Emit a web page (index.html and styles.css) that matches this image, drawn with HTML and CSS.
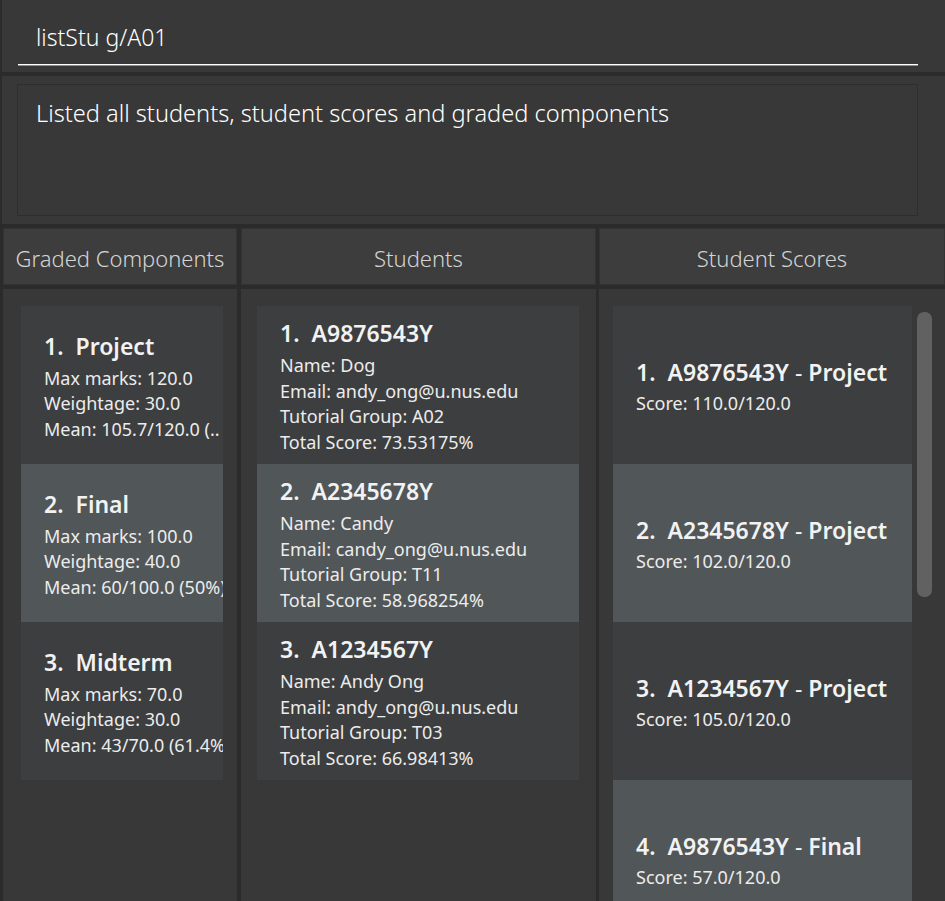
FILE: index.html
```html
<!DOCTYPE html>
<html lang="en">
<head>
<meta charset="utf-8">
<title>Grades</title>
<link rel="stylesheet" href="styles.css">
</head>
<body>
<div class="app">
  <div class="command-pane">
    <div class="command-field">listStu g/A01</div>
  </div>
  <div class="result-pane">
    <div class="result-box">Listed all students, student scores and graded components</div>
  </div>
  <div class="columns">
    <section class="column col-gc">
      <div class="col-header">Graded Components</div>
      <div class="col-list">
        <div class="card even">
          <div class="card-title"><span class="idx">1.</span>Project</div>
          <div class="card-line">Max marks: 120.0</div>
          <div class="card-line">Weightage: 30.0</div>
          <div class="card-line">Mean: 105.7/120.0 (..</div>
        </div>
        <div class="card odd">
          <div class="card-title"><span class="idx">2.</span>Final</div>
          <div class="card-line">Max marks: 100.0</div>
          <div class="card-line">Weightage: 40.0</div>
          <div class="card-line">Mean: 60/100.0 (50%)</div>
        </div>
        <div class="card even">
          <div class="card-title"><span class="idx">3.</span>Midterm</div>
          <div class="card-line">Max marks: 70.0</div>
          <div class="card-line">Weightage: 30.0</div>
          <div class="card-line">Mean: 43/70.0 (61.4%)</div>
        </div>
      </div>
    </section>
    <section class="column col-st">
      <div class="col-header">Students</div>
      <div class="col-list">
        <div class="card even">
          <div class="card-title"><span class="idx">1.</span>A9876543Y</div>
          <div class="card-line">Name: Dog</div>
          <div class="card-line">Email: andy_ong@u.nus.edu</div>
          <div class="card-line">Tutorial Group: A02</div>
          <div class="card-line">Total Score: 73.53175%</div>
        </div>
        <div class="card odd">
          <div class="card-title"><span class="idx">2.</span>A2345678Y</div>
          <div class="card-line">Name: Candy</div>
          <div class="card-line">Email: candy_ong@u.nus.edu</div>
          <div class="card-line">Tutorial Group: T11</div>
          <div class="card-line">Total Score: 58.968254%</div>
        </div>
        <div class="card even">
          <div class="card-title"><span class="idx">3.</span>A1234567Y</div>
          <div class="card-line">Name: Andy Ong</div>
          <div class="card-line">Email: andy_ong@u.nus.edu</div>
          <div class="card-line">Tutorial Group: T03</div>
          <div class="card-line">Total Score: 66.98413%</div>
        </div>
      </div>
    </section>
    <section class="column col-sc">
      <div class="col-header">Student Scores</div>
      <div class="col-list">
        <div class="card even">
          <div class="card-title"><span class="idx">1.</span>A9876543Y<span class="sep"> - </span>Project</div>
          <div class="card-line">Score: 110.0/120.0</div>
        </div>
        <div class="card odd">
          <div class="card-title"><span class="idx">2.</span>A2345678Y<span class="sep"> - </span>Project</div>
          <div class="card-line">Score: 102.0/120.0</div>
        </div>
        <div class="card even">
          <div class="card-title"><span class="idx">3.</span>A1234567Y<span class="sep"> - </span>Project</div>
          <div class="card-line">Score: 105.0/120.0</div>
        </div>
        <div class="card odd">
          <div class="card-title"><span class="idx">4.</span>A9876543Y<span class="sep"> - </span>Final</div>
          <div class="card-line">Score: 57.0/120.0</div>
        </div>
        <div class="scrollbar"></div>
      </div>
    </section>
  </div>
</div>
</body>
</html>
```

FILE: styles.css
```css
* { box-sizing: border-box; }

html, body {
  margin: 0;
  padding: 0;
  width: 945px;
  height: 901px;
  overflow: hidden;
  background: #2b2b2b;
  font-family: "Noto Sans", "Open Sans", sans-serif;
  color: #ffffff;
}

.app {
  display: flex;
  flex-direction: column;
  height: 901px;
}

.command-pane {
  height: 72px;
  margin-left: 2px;
  background: #383838;
  padding: 0 27px 0 16px;
}

.command-field {
  height: 65px;
  padding: 22px 0 0 18px;
  font-size: 23px;
  font-weight: 300;
  line-height: 1.36;
  color: #ffffff;
  border-bottom: 1px solid #ffffff;
  box-shadow: 0 1px 0 #8c8c8c;
}

.result-pane {
  height: 148px;
  margin-top: 4px;
  margin-left: 2px;
  background: #383838;
  padding: 8px 27px 8px 15px;
}

.result-box {
  height: 100%;
  border: 1px solid #2e2e2e;
  padding: 12px 0 0 18px;
  font-size: 23.6px;
  font-weight: 300;
  line-height: 1.36;
  color: #ffffff;
}

.columns {
  flex: 1;
  display: flex;
  margin-top: 4px;
  margin-left: 3px;
  min-height: 0;
}

.column {
  display: flex;
  flex-direction: column;
}

.col-gc { width: 234px; }
.col-st { width: 355px; margin-left: 4px; }
.col-sc { flex: 1; margin-left: 3px; }

.col-header {
  height: 57px;
  flex: none;
  background: #3d3d3d;
  border: 1px solid #333333;
  display: flex;
  align-items: center;
  justify-content: center;
  padding-top: 2px;
  font-size: 22px;
  font-weight: 300;
  color: #d4d4d4;
  white-space: nowrap;
}

.col-list {
  position: relative;
  flex: 1;
  margin-top: 4px;
  background: #383838;
  overflow: hidden;
  display: flex;
  flex-direction: column;
}

.col-gc .col-list { padding: 17px 14px 0 18px; }
.col-st .col-list { padding: 17px 17px 0 16px; }
.col-sc .col-list { padding: 17px 33px 0 14px; }

.card {
  height: 158px;
  flex: none;
  display: flex;
  flex-direction: column;
  justify-content: center;
  padding-left: 23px;
  overflow: hidden;
  white-space: nowrap;
}

.card.even { background: #3c3e3f; }
.card.odd { background: #515658; }

.card-title {
  font-size: 23px;
  font-weight: 600;
  line-height: 38.5px;
  color: #f2f2f2;
}

.idx {
  display: inline-block;
  margin-right: 12px;
}

.sep {
  font-weight: 400;
}

.card-line {
  font-size: 18px;
  line-height: 25.7px;
  color: #ececec;
}

.scrollbar {
  position: absolute;
  left: 318px;
  top: 23px;
  width: 15px;
  height: 285px;
  border-radius: 7px;
  background: #616161;
}
```
